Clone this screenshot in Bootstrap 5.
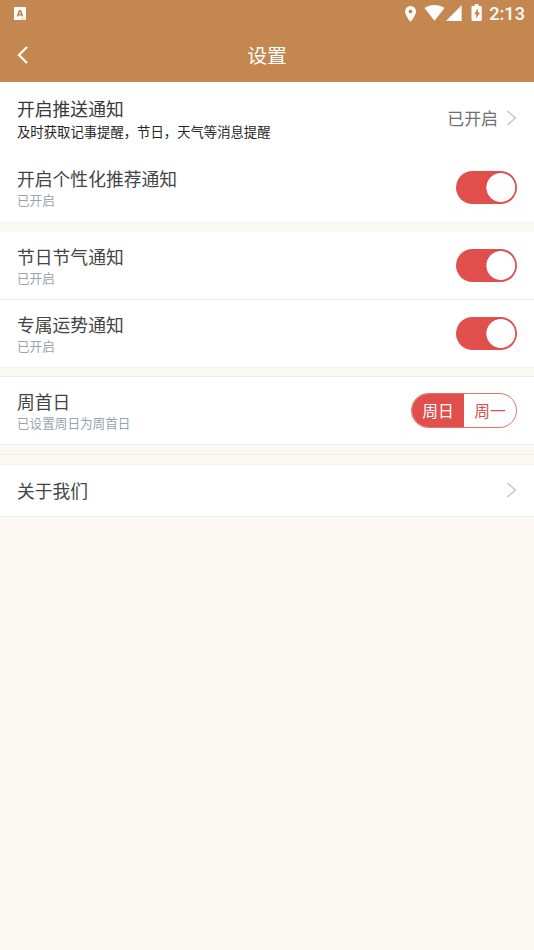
<!DOCTYPE html>
<html lang="zh-CN">
<head>
<meta charset="utf-8">
<meta name="viewport" content="width=device-width, initial-scale=1">
<title>设置</title>
<link rel="stylesheet" href="https://cdn.jsdelivr.net/npm/bootstrap@5.3.0/dist/css/bootstrap.min.css">
<style>
body{background:#fbf7f2;font-family:"Noto Sans CJK SC",sans-serif;color:#444;line-height:1}
.app-head{background:#c58750;color:#fff;height:82px}
.status{height:27px;padding:0 9px 0 14px}
.clock{font:500 18px/27px Roboto,sans-serif;letter-spacing:.1px;margin-left:4px}
.titlebar{height:55px;padding:0 17px;display:grid;grid-template-columns:1fr auto 1fr}
.titlebar h1{font-size:19.8px;font-weight:400;line-height:24px}
.setting{background:#fff;padding:0 17px;height:67px}
.setting.push{height:72px}
.setting.about{height:51px;padding-bottom:2px}
.name{font-size:17.8px;line-height:26px}
.desc{font-size:12.6px;line-height:18px;color:#98a3ad}
.texts{padding-bottom:1px}
.push .name{color:#383838}
.push .desc{font-size:13.35px;line-height:21px;color:#262626}
.value{font-size:16.9px;line-height:24px;color:#707070;margin-right:7px}
.line{height:1px;background:#ececec}
.faint{background:#f3f1ee}
.space-a{height:11px}
.space-b{height:9px}
.space-c{height:8px}
.toggle.form-check-input{width:61px;height:33px;margin:0;border:0;border-radius:17px;background-color:#e14f4d;background-size:100% 100%;background-position:0 0;background-repeat:no-repeat;background-image:radial-gradient(circle at 44.8px 16.5px,#fff 14px,rgba(255,255,255,0) 14.8px)!important}
.weekday{width:106px;height:35px;border:1px solid #e7706e;border-radius:18px;overflow:hidden;font-size:15.8px;line-height:34px;text-align:center;background:#fff;margin-bottom:1px}
.weekday .on{background:#e14f4d;color:#fff}
.weekday .off{color:#d9504e}
</style>
<script src="https://cdn.jsdelivr.net/npm/bootstrap@5.3.0/dist/js/bootstrap.bundle.min.js"></script>
</head>
<body>
<header class="app-head">
  <div class="status d-flex align-items-center justify-content-between">
    <svg width="12" height="13" viewBox="0 0 12 13"><rect width="12" height="13" rx=".6" fill="#fff"/><path d="M3.4 9.5 5.4 3.8h1.2l2 5.7M4.2 7.6h3.6" fill="none" stroke="#c58750" stroke-width="1.6"/><path d="M6.3 11.8H11" stroke="#dfb896" stroke-width=".8"/></svg>
    <div class="d-flex align-items-center">
      <svg width="84" height="27" viewBox="0 0 84 27" fill="#fff"><path fill-rule="evenodd" d="M9.5 6A5.4 5.4 0 0 0 4.1 11.4C4.1 15.4 9.5 21.8 9.5 21.8S15 15.4 15 11.4A5.4 5.4 0 0 0 9.5 6Zm0 3.5a1.9 1.9 0 1 1 0 3.8 1.9 1.9 0 0 1 0-3.8Z"/><path d="M23.5 8.1C29 4 38 4 43.5 8.1L33.5 20.8Z"/><path d="M45 21 60.6 5.3V21Z"/><path fill-rule="evenodd" d="M73.6 4.2h4v1.7h2.2q.9 0 .9.9v13.3q0 .9-.9.9h-8.4q-.9 0-.9-.9V6.8q0-.9.9-.9h2.2ZM77 8.5 73 14.2h2.2v4.4l3.9-6H77Z"/></svg>
      <span class="clock">2:13</span>
    </div>
  </div>
  <div class="titlebar align-items-center">
    <svg width="12" height="18" viewBox="0 0 12 18" fill="none" stroke="#fff" stroke-width="2.2"><path d="M10 .9 2 9l8 8.1"/></svg>
    <h1 class="m-0">设置</h1>
  </div>
</header>
<main>
  <div class="setting push d-flex align-items-center justify-content-between">
    <div><div class="name">开启推送通知</div><div class="desc">及时获取记事提醒，节日，天气等消息提醒</div></div>
    <div class="d-flex align-items-center"><span class="value">已开启</span><svg width="12" height="16" viewBox="0 0 12 16" fill="none" stroke="#c3c7cc" stroke-width="1.5"><path d="m2.5 1 7.8 7-7.8 7"/></svg></div>
  </div>
  <div class="setting d-flex align-items-center justify-content-between">
    <div class="texts"><div class="name">开启个性化推荐通知</div><div class="desc">已开启</div></div>
    <input class="toggle form-check-input" type="checkbox" role="switch" checked aria-label="开启个性化推荐通知">
  </div>
  <div class="space-a"></div>
  <div class="setting d-flex align-items-center justify-content-between">
    <div class="texts"><div class="name">节日节气通知</div><div class="desc">已开启</div></div>
    <input class="toggle form-check-input" type="checkbox" role="switch" checked aria-label="节日节气通知">
  </div>
  <div class="line"></div>
  <div class="setting d-flex align-items-center justify-content-between">
    <div class="texts"><div class="name">专属运势通知</div><div class="desc">已开启</div></div>
    <input class="toggle form-check-input" type="checkbox" role="switch" checked aria-label="专属运势通知">
  </div>
  <div class="line faint"></div><div class="space-c"></div><div class="line"></div>
  <div class="setting d-flex align-items-center justify-content-between">
    <div class="texts"><div class="name">周首日</div><div class="desc">已设置周日为周首日</div></div>
    <div class="weekday d-flex"><span class="on w-50">周日</span><span class="off w-50">周一</span></div>
  </div>
  <div class="line"></div><div class="space-b"></div><div class="line"></div><div class="space-b"></div><div class="line faint"></div>
  <div class="setting about d-flex align-items-center justify-content-between">
    <div class="name">关于我们</div>
    <svg width="12" height="16" viewBox="0 0 12 16" fill="none" stroke="#c3c7cc" stroke-width="1.5"><path d="m2.5 1 7.8 7-7.8 7"/></svg>
  </div>
  <div class="line"></div>
</main>
</body>
</html>
